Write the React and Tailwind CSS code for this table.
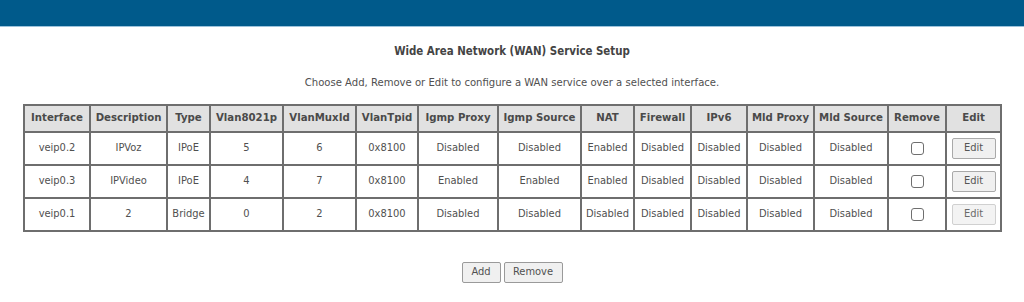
import React from "react";

const cols = [
  ["Interface", 66],
  ["Description", 77],
  ["Type", 43],
  ["Vlan8021p", 73],
  ["VlanMuxId", 73],
  ["VlanTpid", 62],
  ["Igmp Proxy", 80],
  ["Igmp Source", 83],
  ["NAT", 53],
  ["Firewall", 57],
  ["IPv6", 56],
  ["Mld Proxy", 67],
  ["Mld Source", 74],
  ["Remove", 58],
  ["Edit", 55],
];

const rows = [
  ["veip0.2", "IPVoz", "IPoE", "5", "6", "0x8100", "Disabled", "Disabled", "Enabled", "Disabled", "Disabled", "Disabled", "Disabled"],
  ["veip0.3", "IPVideo", "IPoE", "4", "7", "0x8100", "Enabled", "Enabled", "Enabled", "Disabled", "Disabled", "Disabled", "Disabled"],
  ["veip0.1", "2", "Bridge", "0", "2", "0x8100", "Disabled", "Disabled", "Disabled", "Disabled", "Disabled", "Disabled", "Disabled"],
];

const font = { fontFamily: "'DejaVu Sans Condensed', 'Liberation Sans', sans-serif" };

export default function App() {
  return (
    <div className="w-[1024px] h-[302px] bg-white text-[#505050] text-[11px]" style={font}>
      <div className="h-[27px] bg-[#005a8b] border-b border-[#9cc3dc]" />
      <div className="pt-[17px] text-center font-bold text-[11.4px] text-[#444] leading-[14px]">
        Wide Area Network (WAN) Service Setup
      </div>
      <div className="pt-[18px] text-center text-[11.2px] leading-[14px]">
        Choose Add, Remove or Edit to configure a WAN service over a selected interface.
      </div>
      <div className="pt-[14px] pl-[23px]">
        <table className="table-fixed border-collapse border-2 border-[#6e6e6e] w-[978px]">
          <colgroup>
            {cols.map(([n, w]) => (
              <col key={n} style={{ width: w }} />
            ))}
          </colgroup>
          <thead>
            <tr className="h-[27px] bg-[#e1e1e1]">
              {cols.map(([n]) => (
                <th key={n} className="border-2 border-[#6e6e6e] font-bold text-[11.3px] text-[#4a4a4a] px-0 whitespace-nowrap">
                  {n}
                </th>
              ))}
            </tr>
          </thead>
          <tbody>
            {rows.map((r, i) => (
              <tr key={i} className="h-[33px]">
                {r.map((c, j) => (
                  <td key={j} className="border-2 border-[#6e6e6e] text-center whitespace-nowrap px-0">
                    {c}
                  </td>
                ))}
                <td className="border-2 border-[#6e6e6e] text-center">
                  <span className="inline-block align-middle w-[13px] h-[13px] border border-[#6f6f6f] rounded-[3px] bg-white" />
                </td>
                <td className="border-2 border-[#6e6e6e] text-center">
                  <button
                    className={
                      "inline-block align-middle w-[44px] h-[21px] rounded-[2px] border " +
                      (i === 2
                        ? "bg-[#f3f3f3] border-[#d0d0d0] text-[#6a6a6a]"
                        : "bg-[#f0f0f0] border-[#a9a9a9] text-[#555]")
                    }
                    style={font}
                  >
                    Edit
                  </button>
                </td>
              </tr>
            ))}
          </tbody>
        </table>
      </div>
      <div className="pt-[30px] flex justify-center gap-[3px]">
        <button className="w-[39px] h-[21px] bg-[#f0f0f0] border border-[#9a9a9a] rounded-[2px] text-[#505050]" style={font}>
          Add
        </button>
        <button className="w-[59px] h-[21px] bg-[#f0f0f0] border border-[#9a9a9a] rounded-[2px] text-[#505050]" style={font}>
          Remove
        </button>
      </div>
    </div>
  );
}
